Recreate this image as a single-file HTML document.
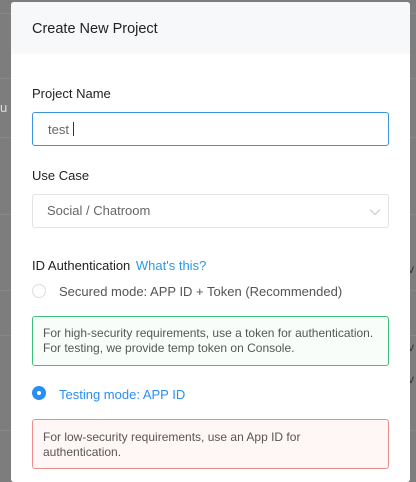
<!DOCTYPE html>
<html><head><style>
body{margin:0;width:416px;height:476px;background:#7d7d7d;position:relative;overflow:hidden;font-family:"Liberation Sans",sans-serif;}
.ln{position:absolute;left:0;right:0;height:1px;background:#888;}
.modal{position:absolute;left:11px;top:2px;width:399px;height:480px;background:#fff;border-radius:3px;}
.hd{position:absolute;left:0;top:0;right:0;height:52px;background:#f7f8fa;border-radius:3px 3px 0 0;}
.a{position:absolute;white-space:nowrap;}
.box{position:absolute;left:21px;width:357px;box-sizing:border-box;border-radius:3px;}
</style></head><body>
<div class="ln" style="top:13px"></div>
<div class="ln" style="top:78px"></div>
<div class="ln" style="top:137px"></div>
<div class="ln" style="top:214px"></div>
<div class="ln" style="top:290px"></div>
<div class="ln" style="top:335px"></div>
<div class="ln" style="top:430px"></div>
<div class="a" style="left:0;top:100px;color:#ddd;font-size:13px">u</div>
<div class="a" style="left:408px;top:262px;color:#333;font-size:12px">v</div>
<div class="a" style="left:408px;top:340px;color:#333;font-size:12px">v</div>
<div class="a" style="left:408px;top:372px;color:#333;font-size:12px">v</div>
<div class="modal">
<div class="hd"></div>
<div class="a" style="left:21px;top:19px;font-size:14.5px;color:#222">Create New Project</div>
<div class="a" style="left:21px;top:84px;font-size:13px;color:#222">Project Name</div>
<div class="box" style="top:110px;height:34px;border:1px solid #3a94e0;"></div>
<div class="a" style="left:37px;top:120px;font-size:13px;color:#666">test<span style="display:inline-block;width:1px;height:14px;background:#333;margin-left:4px;vertical-align:-2px"></span></div>
<div class="a" style="left:21px;top:166px;font-size:13px;color:#222">Use Case</div>
<div class="box" style="top:192px;height:34px;border:1px solid #e3e3e3;"></div>
<div class="a" style="left:36px;top:201px;font-size:13px;color:#666">Social / Chatroom</div>
<svg class="a" style="left:358px;top:206px" width="12" height="8"><path d="M1 1.5L6 6.5L11 1.5" fill="none" stroke="#ccc" stroke-width="1.2"/></svg>
<div class="a" style="left:21px;top:256px;font-size:13px;color:#222">ID Authentication <span style="color:#2a9ae0;margin-left:2px">What's this?</span></div>
<div class="a" style="left:21px;top:282px;width:12px;height:12px;border:1px solid #ddd;border-radius:50%"></div>
<div class="a" style="left:48px;top:282px;font-size:13px;color:#555">Secured mode: APP ID + Token (Recommended)</div>
<div class="box" style="top:314px;height:50px;border:1px solid #3ec17a;background:#f9fdfa;"></div>
<div class="a" style="left:32px;top:324px;font-size:12px;line-height:15px;color:#555">For high-security requirements, use a token for authentication.<br>For testing, we provide temp token on Console.</div>
<div class="a" style="left:21px;top:384px;width:14px;height:14px;background:#2a8ef0;border-radius:50%"><div style="position:absolute;left:5px;top:5px;width:4px;height:4px;background:#fff;border-radius:50%"></div></div>
<div class="a" style="left:48px;top:385px;font-size:13px;color:#2a8ef0">Testing mode: APP ID</div>
<div class="box" style="top:417px;height:50px;border:1px solid #ee8c8c;background:#fff7f6;"></div>
<div class="a" style="left:32px;top:428px;font-size:12px;line-height:15px;color:#555">For low-security requirements, use an App ID for<br>authentication.</div>
</div>
</body></html>
